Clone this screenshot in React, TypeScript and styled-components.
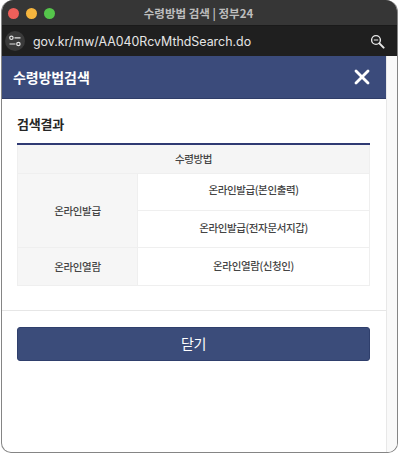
import React from 'react'
import styled, { createGlobalStyle } from 'styled-components'

const GlobalStyle = createGlobalStyle`
  html, body {
    margin: 0;
    padding: 0;
    background: #ffffff;
  }
  * {
    box-sizing: border-box;
  }
`

const Frame = styled.div`
  width: 400px;
  height: 454px;
  padding: 0 2px 1px 1px;
  font-family: "Noto Sans CJK KR", "Liberation Sans", sans-serif;
  overflow: hidden;
`

const Window = styled.div`
  height: 100%;
  display: flex;
  flex-direction: column;
  border: 1px solid #858585;
  border-top: none;
  border-radius: 12px 12px 10px 10px;
  overflow: hidden;
  background: #ffffff;
`

const TitleBar = styled.div`
  position: relative;
  height: 26px;
  flex: none;
  display: flex;
  align-items: center;
  justify-content: center;
  background: #363636;
  border-bottom: 1px solid #1a1a1a;
`

const Lights = styled.div`
  position: absolute;
  left: 6px;
  top: 8px;
  display: flex;
  gap: 7px;
`

const Light = styled.span<{ $color: string }>`
  width: 11px;
  height: 11px;
  border-radius: 50%;
  background: ${(props) => props.$color};
`

const WindowTitle = styled.span`
  font-size: 11.5px;
  font-weight: 700;
  color: #bdbdbd;
  margin-left: -2px;
`

const UrlBar = styled.div`
  height: 30px;
  flex: none;
  display: flex;
  align-items: center;
  padding: 0 12px 0 3px;
  background: #1f1f1f;
`

const TuneButton = styled.div`
  width: 20px;
  height: 20px;
  flex: none;
  display: flex;
  align-items: center;
  justify-content: center;
  border-radius: 50%;
  background: #3a3a3a;
  margin-right: 8px;
`

const Url = styled.span`
  flex: 1;
  font-family: "Inter", "Liberation Sans", sans-serif;
  font-size: 12.4px;
  color: #e6e6e6;
`

const Body = styled.div`
  flex: 1;
  display: flex;
  min-height: 0;
`

const Content = styled.div`
  flex: 1;
  display: flex;
  flex-direction: column;
  min-width: 0;
`

const Scrollbar = styled.div`
  width: 11px;
  flex: none;
  background: #f9f9f9;
  border-left: 1px solid #e8e8e8;
`

const PopupHeader = styled.div`
  height: 43px;
  flex: none;
  display: flex;
  align-items: center;
  justify-content: space-between;
  padding: 0 12px 0 11px;
  background: #3b4b7b;
  border-bottom: 1px solid #2f3d68;
`

const PopupTitle = styled.h1`
  margin: 0;
  font-size: 14px;
  font-weight: 700;
  letter-spacing: -0.1px;
  color: #ffffff;
`

const CloseIcon = styled.svg`
  width: 24px;
  height: 24px;
  display: block;
`

const Main = styled.div`
  height: 212px;
  flex: none;
  padding: 15px 15px 0;
  border-bottom: 1px solid #e6e6e6;
`

const SectionTitle = styled.h2`
  margin: 0 0 9px;
  height: 20px;
  line-height: 20px;
  font-size: 13px;
  font-weight: 700;
  letter-spacing: -0.2px;
  color: #262626;
`

const Table = styled.table`
  width: 353px;
  border-collapse: collapse;
  table-layout: fixed;
  border-top: 2px solid #2f3a73;
  font-size: 10.5px;
  letter-spacing: -0.4px;
  color: #444444;
`

const LabelColumn = styled.col`
  width: 120px;
`

const HeadCell = styled.th`
  height: 29px;
  padding: 0 0 1px;
  font-weight: 500;
  text-align: center;
  background: #f5f5f5;
  border: 1px solid #efefef;
`

const LabelCell = styled.td<{ $tall?: boolean }>`
  height: ${(props) => (props.$tall ? 38 : 37)}px;
  padding: 0;
  text-align: center;
  font-weight: 500;
  background: #f6f6f6;
  border: 1px solid #efefef;
`

const ValueCell = styled.td<{ $lift: number; $tall?: boolean }>`
  height: ${(props) => (props.$tall ? 38 : 37)}px;
  padding: 0 0 ${(props) => props.$lift}px;
  text-align: center;
  font-weight: 500;
  background: #ffffff;
  border: 1px solid #efefef;
`

const Footer = styled.div`
  padding: 16px 15px 0;
`

const CloseButton = styled.button`
  width: 353px;
  height: 34px;
  display: block;
  padding: 0 0 3px;
  border: 1px solid #2f3f6c;
  border-radius: 3px;
  background: #3b4c7a;
  color: #ffffff;
  font-family: inherit;
  font-size: 14px;
  font-weight: 400;
  letter-spacing: -0.5px;
`

const App: React.FC = () => {
  return (
    <>
      <GlobalStyle />
      <Frame>
        <Window>
          <TitleBar>
            <Lights>
              <Light $color="#ee5f5a" />
              <Light $color="#f5b53e" />
              <Light $color="#55c54b" />
            </Lights>
            <WindowTitle>수령방법 검색 | 정부24</WindowTitle>
          </TitleBar>
          <UrlBar>
            <TuneButton>
              <svg width="14" height="14" viewBox="0 0 14 14" fill="none" stroke="#e4e4e4" strokeWidth="1.2">
                <circle cx="3.4" cy="3.8" r="1.7" />
                <path d="M6.5 3.8H12.5" />
                <path d="M1.5 10H7.5" />
                <circle cx="10.4" cy="10" r="1.7" />
              </svg>
            </TuneButton>
            <Url>gov.kr/mw/AA040RcvMthdSearch.do</Url>
            <svg width="15" height="15" viewBox="0 0 15 15" fill="none" stroke="#e8e8e8">
              <circle cx="6" cy="6" r="4.4" strokeWidth="1.4" />
              <path d="M3.8 6H8.2" strokeWidth="1.1" />
              <path d="M9.4 9.4L13.6 13.6" strokeWidth="2" strokeLinecap="round" />
            </svg>
          </UrlBar>
          <Body>
            <Content>
              <PopupHeader>
                <PopupTitle>수령방법검색</PopupTitle>
                <CloseIcon viewBox="0 0 24 24" fill="none" stroke="#ffffff" strokeWidth="2.8" strokeLinecap="round">
                  <path d="M6 6L18 18" />
                  <path d="M18 6L6 18" />
                </CloseIcon>
              </PopupHeader>
              <Main>
                <SectionTitle>검색결과</SectionTitle>
                <Table>
                  <colgroup>
                    <LabelColumn />
                    <col />
                  </colgroup>
                  <thead>
                    <tr>
                      <HeadCell colSpan={2}>수령방법</HeadCell>
                    </tr>
                  </thead>
                  <tbody>
                    <tr>
                      <LabelCell rowSpan={2}>온라인발급</LabelCell>
                      <ValueCell $lift={4}>온라인발급(본인출력)</ValueCell>
                    </tr>
                    <tr>
                      <ValueCell $lift={2}>온라인발급(전자문서지갑)</ValueCell>
                    </tr>
                    <tr>
                      <LabelCell $tall>온라인열람</LabelCell>
                      <ValueCell $lift={1} $tall>온라인열람(신청인)</ValueCell>
                    </tr>
                  </tbody>
                </Table>
              </Main>
              <Footer>
                <CloseButton>닫기</CloseButton>
              </Footer>
            </Content>
            <Scrollbar />
          </Body>
        </Window>
      </Frame>
    </>
  )
}

export default App
